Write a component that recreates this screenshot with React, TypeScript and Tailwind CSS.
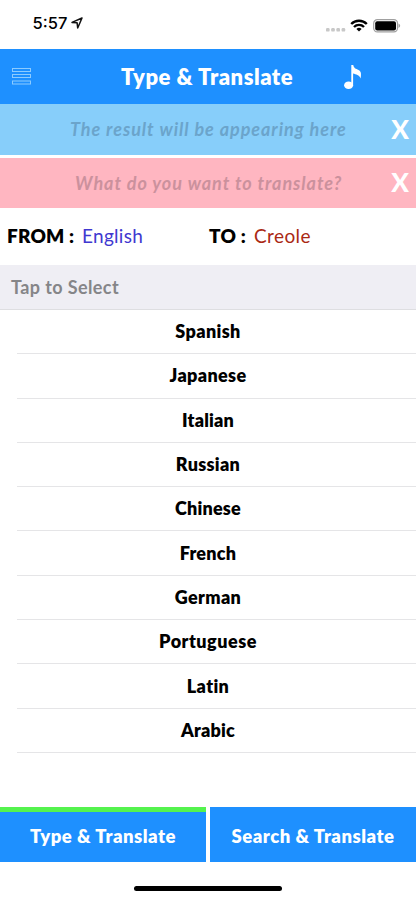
import { useState } from "react";

const languages = [
  { name: "Spanish", style: "tracking-[0.35px]" },
  { name: "Japanese", style: "tracking-[0.35px]" },
  { name: "Italian", style: "tracking-[0.2px]" },
  { name: "Russian", style: "tracking-[0.3px]" },
  { name: "Chinese", style: "tracking-[0.2px]" },
  { name: "French", style: "tracking-[0.25px]" },
  { name: "German", style: "tracking-[0.35px]" },
  { name: "Portuguese", style: "tracking-[0.5px]" },
  { name: "Latin", style: "tracking-[0.35px]" },
  { name: "Arabic", style: "tracking-[0.2px]" },
];

const StatusBar = () => (
  <div className="flex h-[49px] justify-between pl-[32.5px] pr-[15px] pt-[13px]">
    <div className="flex h-5 items-center">
      <span className="font-['Inter',sans-serif] text-[16.5px] font-medium leading-5 text-black">5:57</span>
      <svg className="ml-[4px]" width="12" height="12" viewBox="0 0 12 12" fill="none" stroke="#111" strokeWidth="1.5" strokeLinejoin="round">
        <path d="M11 1 L1 5.4 L6.1 5.8 L6.7 11 Z" />
      </svg>
    </div>
    <div className="flex h-[25px] items-center">
      <svg className="mt-[9px]" width="20" height="4" viewBox="0 0 20 4" fill="#c8c8c8">
        <rect x="0" y="0" width="3.6" height="3.6" rx="1.2" />
        <rect x="5.2" y="0" width="3.6" height="3.6" rx="1.2" />
        <rect x="10.4" y="0" width="3.6" height="3.6" rx="1.2" />
        <rect x="15.6" y="0" width="3.6" height="3.6" rx="1.2" />
      </svg>
      <svg className="ml-[4px]" width="18" height="13" viewBox="0 0 18 13" fill="none" stroke="#000" strokeWidth="2.4">
        <path d="M1.2 5 A11 11 0 0 1 16.8 5" />
        <path d="M4 8 A7 7 0 0 1 14 8" />
        <path d="M9 12.6 L6.4 10 A3.7 3.7 0 0 1 11.6 10 Z" fill="#000" stroke="none" />
      </svg>
      <svg className="ml-[5px]" width="28" height="14" viewBox="0 0 28 14">
        <rect x="0.7" y="0.7" width="23.8" height="12.2" rx="3.6" fill="none" stroke="#a0a0a0" strokeWidth="1.2" />
        <rect x="2.2" y="2.2" width="20.8" height="9.2" rx="2" fill="#000" />
        <path d="M25.5 4.6 Q27.2 5.3 27.2 6.8 Q27.2 8.3 25.5 9 Z" fill="#a0a0a0" />
      </svg>
    </div>
  </div>
);

const Header = () => (
  <div className="flex h-[55px] items-center bg-[#1e90ff]">
    <svg className="ml-[12px]" width="19" height="17" viewBox="0 0 19 17" fill="none" stroke="#8ccbff" strokeWidth="1">
      <rect x="0.5" y="0.5" width="18" height="3" />
      <rect x="0.5" y="6.5" width="18" height="3" />
      <rect x="0.5" y="13" width="18" height="3" />
    </svg>
    <h1 className="ml-[90px] w-[174px] whitespace-nowrap text-[22px] font-extrabold leading-7 tracking-[0.5px] text-white">Type &amp; Translate</h1>
    <svg className="ml-[49px]" width="18" height="26" viewBox="0 0 18 26" fill="#fff">
      <ellipse cx="4.6" cy="21.3" rx="4.5" ry="3.8" />
      <path d="M7.3 1 H9.3 C9.5 4 12 4.7 14.5 6 C17.2 7.3 17.3 9.5 16.7 14.5 C15.2 10.8 12 10.6 9.1 9.6 V21.3 H7.3 Z" />
    </svg>
  </div>
);

export default function App() {
  const [from] = useState("English");
  const [to, setTo] = useState("Creole");
  const [result, setResult] = useState("");
  const [text, setText] = useState("");

  return (
    <div className="flex h-[900px] w-[416px] flex-col overflow-hidden bg-white font-['Lato',sans-serif]">
      <StatusBar />
      <Header />

      <div className="flex h-[51px] items-center bg-[#87cefa]">
        <div className="ml-[70px] w-[277px] whitespace-nowrap text-[18px] font-bold italic tracking-[0.95px] text-[#6ba4cb]">
          {result || "The result will be appearing here"}
        </div>
        <button onClick={() => setResult("")} className="mb-[2px] ml-auto mr-[7px] text-[26px] font-black leading-7 text-white">X</button>
      </div>
      <div className="mt-[3px] flex h-[50px] items-center bg-[#ffb6c1]">
        <div className="ml-[75px] w-[270px] whitespace-nowrap text-[18px] font-bold italic tracking-[0.95px] text-[#cb919d]">
          {text || "What do you want to translate?"}
        </div>
        <button onClick={() => setText("")} className="mb-[2px] ml-auto mr-[7px] text-[26px] font-black leading-7 text-white">X</button>
      </div>

      <div className="flex h-[57px] items-center whitespace-nowrap text-[19px]">
        <div className="flex w-[209px] pl-[7px]">
          <span className="w-[75px] font-extrabold tracking-[0.2px] text-black">FROM :</span>
          <span className="tracking-[0.3px] text-[#4038d0]">{from}</span>
        </div>
        <span className="w-[45px] font-extrabold tracking-[0.2px] text-black">TO :</span>
        <span className="tracking-[0.4px] text-[#aa2814]">{to}</span>
      </div>

      <div className="flex h-[45px] items-center border-b border-[#dedee1] bg-[#efeef4] pl-[11px] text-[18px] font-bold tracking-[0.4px] text-[#858588]">
        Tap to Select
      </div>
      <ul>
        {languages.map((language) => (
          <li key={language.name} onClick={() => setTo(language.name)} className="flex h-[44.3px] pl-[17px]">
            <div className="flex w-full items-center justify-center border-b border-[#e5e5e7] pr-[17px] text-[18px] font-extrabold text-black">
              <span className={language.style}>{language.name}</span>
            </div>
          </li>
        ))}
      </ul>

      <div className="mt-auto flex h-[55px] gap-[4px] text-[18.5px] font-extrabold text-white">
        <button className="w-[206px] border-t-[5px] border-[#54f34e] bg-[#1e90ff] pb-[1px] tracking-[0.5px]">Type &amp; Translate</button>
        <button className="w-[206px] bg-[#1e90ff] pt-[4px] tracking-[0.5px]">Search &amp; Translate</button>
      </div>
      <div className="flex h-[38px] justify-center pt-[24px]">
        <div className="h-[5px] w-[148px] rounded-full bg-black" />
      </div>
    </div>
  );
}
